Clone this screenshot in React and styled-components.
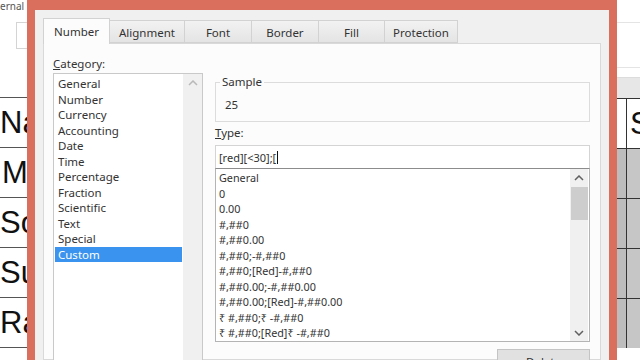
import styled, { createGlobalStyle } from "styled-components";

const FRAME = "#da6f5e";
const UI_FONT = `"Noto Sans", "Open Sans", "DejaVu Sans", sans-serif`;

const GlobalStyles = createGlobalStyle`
  html, body {
    margin: 0;
    padding: 0;
    background: #ffffff;
    overflow: hidden;
  }
`;

const Screen = styled.div`
  display: flex;
  width: 640px;
  height: 360px;
  overflow: hidden;
  background: #ffffff;
`;

/* ---- spreadsheet behind the dialog ---- */

const LeftSheet = styled.div`
  width: 27px;
  flex: none;
  display: flex;
  flex-direction: column;
  overflow: hidden;
`;

const SheetTop = styled.div`
  height: ${(p) => p.h}px;
  flex: none;
  display: flex;
  flex-direction: column;
`;

const RibbonText = styled.div`
  font: 10px/11px ${UI_FONT};
  color: #555;
  white-space: nowrap;
  padding-top: 1px;
`;

const NameBox = styled.div`
  margin: 10px 0 0 16px;
  height: 25px;
  border: 1px solid #d4d4d4;
  border-right: none;
`;

const Line = styled.div`
  height: 1px;
  background: #e4e4e4;
  margin-top: ${(p) => p.top}px;
`;

const SheetRow = styled.div`
  height: 49px;
  flex: none;
  display: flex;
  align-items: center;
  border-top: 1px solid #555;
  font: 31px/1 "Liberation Sans", Arial, sans-serif;
  color: #111;
  white-space: nowrap;
  padding-left: ${(p) => p.indent || 0}px;
`;

const RightSheet = styled.div`
  flex: 1;
  display: flex;
  flex-direction: column;
  overflow: hidden;
`;

const HeaderRow = styled.div`
  height: 20px;
  flex: none;
  background: #e7e7e7;
  border-top: 1px solid #dcdcdc;
`;

const GridRow = styled.div`
  height: 49px;
  flex: none;
  display: flex;
  border-top: 1px solid #333;
  background: ${(p) => (p.selected ? "#c6c6c6" : "#ffffff")};
`;

const RowHead = styled.div`
  width: 9px;
  flex: none;
  background: ${(p) => (p.selected ? "#bdbdbd" : "#ffffff")};
`;

const GridCell = styled.div`
  flex: 1;
  border-left: 1px solid #333;
  padding-left: 3px;
  display: flex;
  align-items: center;
  font: 31px/1 "Liberation Sans", Arial, sans-serif;
  color: #111;
  white-space: nowrap;
  overflow: hidden;
`;

/* ---- Format Cells dialog ---- */

const Dialog = styled.div`
  width: 590px;
  flex: none;
  display: flex;
  flex-direction: column;
  font-family: ${UI_FONT};
  color: #333;
`;

const TitleBar = styled.div`
  height: 10px;
  flex: none;
  background: ${FRAME};
  overflow: hidden;
  display: flex;
  justify-content: center;
`;

const TitleText = styled.div`
  margin-top: -12px;
  font-size: 14px;
  line-height: 14px;
  color: #8a4a40;
`;

const DialogBody = styled.div`
  flex: 1;
  display: flex;
  flex-direction: column;
  background: #f0f0f0;
  border-left: 8px solid ${FRAME};
  border-right: 8px solid ${FRAME};
  padding: 8px 8px 0;
  min-height: 0;
`;

const TabStrip = styled.div`
  display: flex;
  height: 25px;
  flex: none;
  align-items: flex-start;
`;

const Tab = styled.div`
  width: ${(p) => p.w}px;
  height: ${(p) => (p.active ? 26 : 23)}px;
  margin-top: ${(p) => (p.active ? 0 : 2)}px;
  margin-left: -1px;
  box-sizing: border-box;
  border: 1px solid #d2d2d2;
  border-bottom: ${(p) => (p.active ? "none" : "1px solid #d2d2d2")};
  background: ${(p) =>
    p.active ? "#fcfcfc" : "linear-gradient(#f2f2f2, #e4e4e4)"};
  position: relative;
  z-index: ${(p) => (p.active ? 2 : 1)};
  display: flex;
  align-items: center;
  justify-content: center;
  padding-top: ${(p) => (p.active ? 0 : 1)}px;
  font-size: 11.5px;
  color: #333;

  &:first-child {
    margin-left: 0;
  }
`;

const TabPanel = styled.div`
  flex: 1;
  display: grid;
  grid-template-columns: 150px 375px;
  column-gap: 12px;
  align-items: start;
  background: #fcfcfc;
  border: 1px solid #d9d9d9;
  padding: 13px 10px 0 9px;
  min-height: 0;
`;

const Column = styled.div`
  display: flex;
  flex-direction: column;
`;

const FieldLabel = styled.div`
  font-size: 11.5px;
  line-height: 14px;
  color: #333;
  margin-top: ${(p) => p.top || 0}px;
`;

const CategoryBox = styled.div`
  margin-top: 2px;
  height: 300px;
  display: flex;
  background: #ffffff;
  border: 1px solid #c9c9c9;
`;

const ItemColumn = styled.div`
  flex: 1;
  padding-top: 2px;
  display: flex;
  flex-direction: column;
`;

const ListItem = styled.div`
  height: 15.5px;
  line-height: 15.5px;
  margin: 0 1px;
  padding-left: ${(p) => p.pad || 3}px;
  font-size: 11.5px;
  white-space: nowrap;
  color: ${(p) => (p.selected ? "#ffffff" : "#333")};
  background: ${(p) => (p.selected ? "#3a93ee" : "transparent")};
`;

const ScrollTrack = styled.div`
  width: ${(p) => p.w}px;
  flex: none;
  background: #f0f0f0;
  display: flex;
  flex-direction: column;
  align-items: center;
`;

const ArrowSlot = styled.div`
  height: 17px;
  flex: none;
  display: flex;
  align-items: center;
  justify-content: center;
  width: 100%;
`;

const Thumb = styled.div`
  width: 17px;
  height: 33px;
  flex: none;
  margin-top: 1px;
  background: #cdcdcd;
`;

const TrackFill = styled.div`
  flex: 1;
`;

const SampleGroup = styled.fieldset`
  margin: 18px 0 0;
  padding: 9px 9px 9px;
  border: 1px solid #dcdcdc;
  min-width: 0;
`;

const SampleLegend = styled.legend`
  padding: 0 2px;
  margin-left: -5px;
  font-size: 11.5px;
  line-height: 14px;
  color: #333;
`;

const SampleValue = styled.div`
  font-size: 11.5px;
  line-height: 14px;
  color: #333;
`;

const TypeInput = styled.div`
  margin-top: 5px;
  height: 23px;
  box-sizing: border-box;
  border: 1px solid #d4d4d4;
  border-bottom: none;
  background: #ffffff;
  display: flex;
  align-items: center;
  padding-left: 3px;
  font-size: 11px;
  color: #333;
  white-space: nowrap;
`;

const Caret = styled.span`
  display: inline-block;
  width: 1px;
  height: 13px;
  background: #111;
  margin-left: 1px;
`;

const FormatList = styled.div`
  height: 174px;
  box-sizing: border-box;
  display: flex;
  background: #ffffff;
  border: 1px solid #b4b4b4;
  border-top-color: #8c8c8c;
  padding-right: 1px;
`;

const FormatItems = styled.div`
  flex: 1;
  padding-top: 1px;
  display: flex;
  flex-direction: column;
`;

const FormatItem = styled.div`
  height: 15.5px;
  line-height: 15.5px;
  padding-left: 3px;
  font-size: 10.8px;
  color: #333;
  white-space: nowrap;
`;

const ButtonRow = styled.div`
  display: flex;
  justify-content: flex-end;
  margin-top: 7px;
`;

const Button = styled.div`
  width: 93px;
  height: 24px;
  box-sizing: border-box;
  background: #e1e1e1;
  border: 1px solid #c4c4c4;
  display: flex;
  align-items: center;
  justify-content: center;
  font-size: 11.5px;
  color: #333;
`;

const Chevron = ({ up, color }) => (
  <svg width="10" height="6" viewBox="0 0 10 6">
    <polyline
      points={up ? "1,5 5,1 9,5" : "1,1 5,5 9,1"}
      fill="none"
      stroke={color}
      strokeWidth="1.5"
    />
  </svg>
);

const TABS = [
  ["Number", 67],
  ["Alignment", 76],
  ["Font", 68],
  ["Border", 68],
  ["Fill", 67],
  ["Protection", 74],
];

const CATEGORIES = [
  "General",
  "Number",
  "Currency",
  "Accounting",
  "Date",
  "Time",
  "Percentage",
  "Fraction",
  "Scientific",
  "Text",
  "Special",
  "Custom",
];

const FORMATS = [
  "General",
  "0",
  "0.00",
  "#,##0",
  "#,##0.00",
  "#,##0;-#,##0",
  "#,##0;[Red]-#,##0",
  "#,##0.00;-#,##0.00",
  "#,##0.00;[Red]-#,##0.00",
  "₹ #,##0;₹ -#,##0",
  "₹ #,##0;[Red]₹ -#,##0",
];

const LEFT_CELLS = ["Na", "M", "So", "Su", "Ra", ""];

export default function App() {
  return (
    <Screen>
      <GlobalStyles />

      <LeftSheet>
        <SheetTop h={97}>
          <RibbonText>ernal</RibbonText>
          <NameBox />
        </SheetTop>
        {LEFT_CELLS.map((t, i) => (
          <SheetRow key={i} indent={t === "M" ? 2 : 0}>
            {t}
          </SheetRow>
        ))}
      </LeftSheet>

      <Dialog>
        <TitleBar>
          <TitleText>Format Cells</TitleText>
        </TitleBar>
        <DialogBody>
          <TabStrip>
            {TABS.map(([label, w], i) => (
              <Tab key={label} w={w} active={i === 0}>
                {label}
              </Tab>
            ))}
          </TabStrip>

          <TabPanel>
            <Column>
              <FieldLabel>
                <u>C</u>ategory:
              </FieldLabel>
              <CategoryBox>
                <ItemColumn>
                  {CATEGORIES.map((c) => (
                    <ListItem key={c} selected={c === "Custom"}>
                      {c}
                    </ListItem>
                  ))}
                </ItemColumn>
                <ScrollTrack w={19}>
                  <ArrowSlot>
                    <Chevron up color="#b9b9b9" />
                  </ArrowSlot>
                </ScrollTrack>
              </CategoryBox>
            </Column>

            <Column>
              <SampleGroup>
                <SampleLegend>Sample</SampleLegend>
                <SampleValue>25</SampleValue>
              </SampleGroup>

              <FieldLabel top={4}>
                <u>T</u>ype:
              </FieldLabel>
              <TypeInput>
                [red][&lt;30];[
                <Caret />
              </TypeInput>

              <FormatList>
                <FormatItems>
                  {FORMATS.map((f) => (
                    <FormatItem key={f}>{f}</FormatItem>
                  ))}
                </FormatItems>
                <ScrollTrack w={18}>
                  <ArrowSlot>
                    <Chevron up color="#606060" />
                  </ArrowSlot>
                  <Thumb />
                  <TrackFill />
                  <ArrowSlot>
                    <Chevron color="#606060" />
                  </ArrowSlot>
                </ScrollTrack>
              </FormatList>

              <ButtonRow>
                <Button>Delete</Button>
              </ButtonRow>
            </Column>
          </TabPanel>
        </DialogBody>
      </Dialog>

      <RightSheet>
        <SheetTop h={77}>
          <Line top={22} />
          <Line top={44} />
        </SheetTop>
        <HeaderRow />
        {[0, 1, 2, 3, 4].map((i) => (
          <GridRow key={i} selected={i > 0}>
            <RowHead selected={i > 0} />
            <GridCell>{i === 0 ? "S" : ""}</GridCell>
          </GridRow>
        ))}
      </RightSheet>
    </Screen>
  );
}
